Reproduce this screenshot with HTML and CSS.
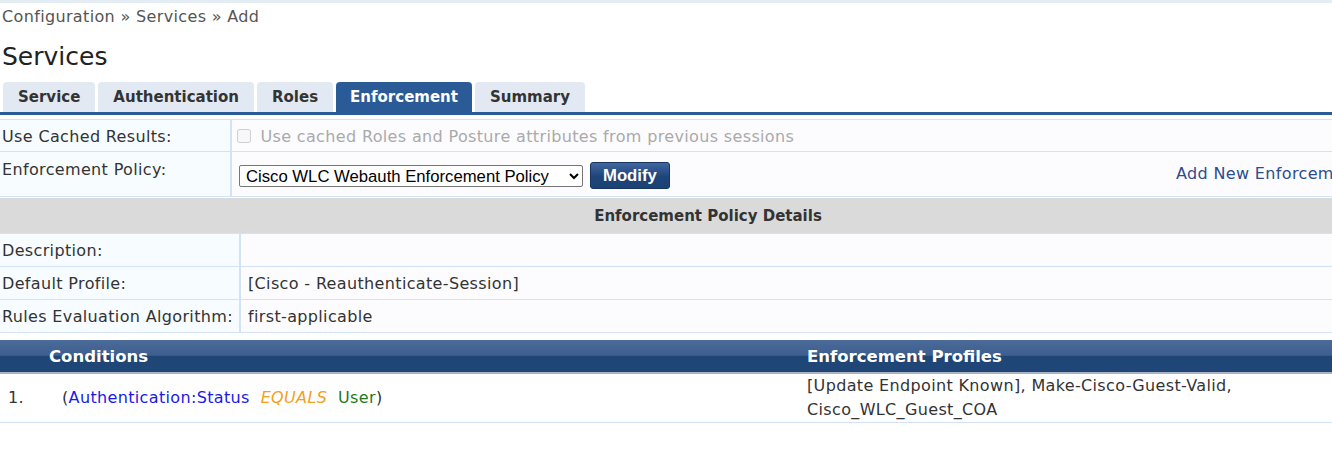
FILE: index.html
```html
<!DOCTYPE html>
<html lang="en">
<head>
    <meta charset="UTF-8">
    <title>Services - Add</title>
    <link rel="stylesheet" href="styles.css">
</head>
<body>
    <div class="page">
        <div class="crumbs">Configuration &raquo; Services &raquo; Add</div>
        <h1>Services</h1>

        <ul class="tabs">
            <li class="tab">Service</li>
            <li class="tab">Authentication</li>
            <li class="tab">Roles</li>
            <li class="tab active">Enforcement</li>
            <li class="tab">Summary</li>
        </ul>

        <table class="form">
            <tr>
                <td class="label">Use Cached Results:</td>
                <td class="value muted">
                    <label class="check"><input type="checkbox" disabled> Use cached Roles and Posture attributes from previous sessions</label>
                </td>
            </tr>
            <tr class="policy-row">
                <td class="label top">Enforcement Policy:</td>
                <td class="value">
                    <div class="policy">
                        <select class="policy-select">
                            <option>Cisco WLC Webauth Enforcement Policy</option>
                        </select>
                        <button class="btn" type="button">Modify</button>
                        <a class="add-link" href="#">Add New Enforcement Policy</a>
                    </div>
                </td>
            </tr>
        </table>

        <table class="details">
            <tr>
                <th colspan="2" class="section">Enforcement Policy Details</th>
            </tr>
            <tr>
                <td class="label">Description:</td>
                <td class="value"></td>
            </tr>
            <tr>
                <td class="label">Default Profile:</td>
                <td class="value">[Cisco - Reauthenticate-Session]</td>
            </tr>
            <tr>
                <td class="label">Rules Evaluation Algorithm:</td>
                <td class="value">first-applicable</td>
            </tr>
        </table>

        <table class="rules">
            <colgroup>
                <col class="c-num">
                <col class="c-cond">
                <col class="c-prof">
            </colgroup>
            <thead>
                <tr>
                    <th></th>
                    <th>Conditions</th>
                    <th class="prof">Enforcement Profiles</th>
                </tr>
            </thead>
            <tbody>
                <tr>
                    <td class="num">1.</td>
                    <td class="cond">(<span class="attr">Authentication:Status</span>&nbsp; <span class="op">EQUALS</span>&nbsp; <span class="val">User</span>)</td>
                    <td class="prof"><div class="prof-list">[Update Endpoint Known], Make-Cisco-Guest-Valid, Cisco_WLC_Guest_COA</div></td>
                </tr>
            </tbody>
        </table>
    </div>
</body>
</html>
```

FILE: styles.css
```css
html, body {
    margin: 0;
    padding: 0;
    overflow: hidden;
    background-color: #fff;
}

body {
    font-family: "DejaVu Sans", Verdana, sans-serif;
    font-size: 16px;
    letter-spacing: 0.35px;
    color: #333;
    border-top: 3px solid #e4ecf4;
}

.page {
    width: 1416px;
}

.crumbs {
    color: #555;
    line-height: 20px;
    padding: 4px 0 0 2px;
}

h1 {
    margin: 0;
    padding: 13px 0 0 2px;
    font-size: 25px;
    font-weight: normal;
    letter-spacing: 0;
    line-height: 34px;
    color: #222;
}

/* tab strip */
.tabs {
    display: flex;
    gap: 3px;
    list-style: none;
    margin: 8px 0 0 0;
    padding: 0 0 0 3px;
    border-bottom: 3px solid #2a5b97;
}

.tab {
    height: 30px;
    line-height: 31px;
    padding: 0 15px;
    background-color: #e2e9f2;
    border-radius: 4px 4px 0 0;
    font-weight: bold;
    font-size: 15px;
    letter-spacing: 0;
    color: #333;
}

.tab.active {
    padding: 0 14px;
    background-color: #2a5b97;
    color: #fff;
}

/* form tables */
table {
    border-collapse: collapse;
    width: 100%;
}

.form {
    margin-top: 4px;
}

td {
    border-top: 1px solid #d3e2f6;
    border-bottom: 1px solid #d3e2f6;
    padding: 2px 0 0 2px;
    height: 32px;
    box-sizing: border-box;
    vertical-align: middle;
}

td.label {
    background-color: #f6fcff;
    border-right: 2px solid #d3e2f6;
}

td.value {
    background-color: #fcfcff;
    padding-left: 7px;
}

.form td.label {
    width: 231px;
}

td.top {
    vertical-align: top;
    padding-top: 8px;
}

.policy-row td {
    height: 45px;
}

.muted {
    color: #aaa;
}

.check input {
    margin: 0 4px 0 -2px;
    width: 14px;
    height: 14px;
    vertical-align: -1px;
}

.policy {
    display: flex;
    align-items: center;
    padding-top: 1px;
}

.policy-select {
    font-family: "Liberation Sans", Arial, sans-serif;
    font-size: 16.7px;
    letter-spacing: 0;
    height: 22px;
    width: 344px;
    padding: 0 0 0 2px;
    border: 1px solid #767676;
    border-radius: 2px;
    background-color: #fff;
    color: #000;
}

.btn {
    margin-left: 7px;
    height: 27px;
    padding: 0 12px;
    font-family: "Liberation Sans", Arial, sans-serif;
    font-size: 16.7px;
    font-weight: bold;
    letter-spacing: 0;
    color: #fff;
    background: linear-gradient(#4267a0, #1d4579 55%, #1b4275);
    border: 1px solid #16355f;
    border-radius: 3px;
}

.add-link {
    margin: 0 0 5px auto;
    width: 240px;
    white-space: nowrap;
    overflow: hidden;
    color: #2c4c8c;
    text-decoration: none;
}

.details {
    margin-top: 1px;
}

.details .section {
    height: 35px;
    padding: 0;
    background-color: #dadada;
    border-bottom: 1px solid #d3e2f6;
    font-size: 15px;
    font-weight: bold;
    letter-spacing: 0;
    color: #333;
}

.details td {
    height: 33px;
    padding-top: 0;
}

.details td.label {
    width: 240px;
}

/* rules table */
.rules {
    margin-top: 7px;
    table-layout: fixed;
}

.c-num {
    width: 49px;
}

.c-cond {
    width: 758px;
}

.rules th {
    height: 32px;
    padding: 0;
    text-align: left;
    font-size: 16.5px;
    font-weight: bold;
    letter-spacing: 0;
    color: #fff;
    background: linear-gradient(#4b6b99, #3d5e8f 48%, #1f4677 50%, #1f4677);
    border-bottom: 2px solid #a8b4c4;
}

.rules td {
    height: 42px;
    padding-top: 0;
    background-color: #fff;
    border-top: none;
    line-height: 24px;
}

.rules td.num {
    padding-left: 8px;
}

.rules td.cond {
    padding-left: 13px;
}

.rules td.prof {
    padding: 0;
}

.prof-list {
    width: 440px;
}

.attr {
    color: #1a1ae6;
}

.op {
    color: #f5a020;
    font-style: italic;
}

.val {
    color: #1f7a1f;
}
```
